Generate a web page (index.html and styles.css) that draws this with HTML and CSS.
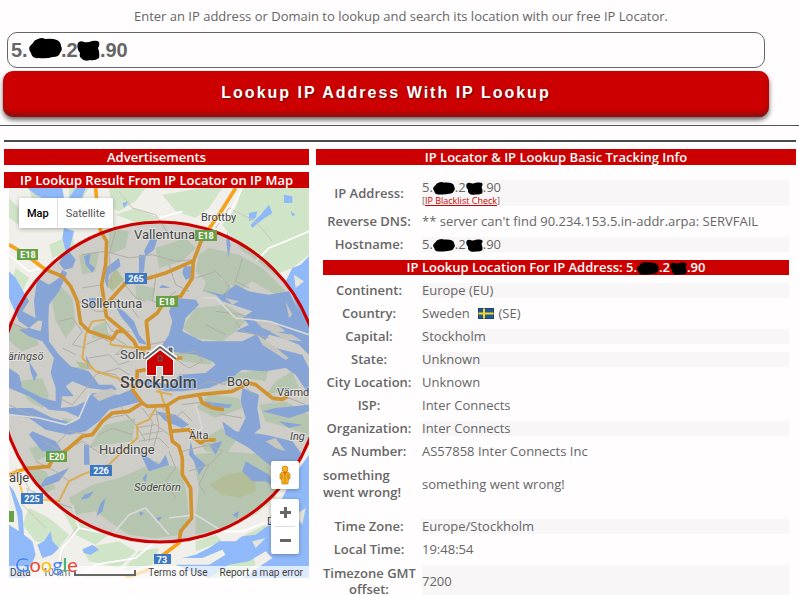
FILE: index.html
```html
<!DOCTYPE html>
<html lang="en">
<head>
    <meta charset="UTF-8">
    <meta name="viewport" content="width=device-width, initial-scale=1.0">
    <title>IP Lookup</title>
    <link rel="stylesheet" href="styles.css">
</head>
<body>
    <svg class="defs" aria-hidden="true">
        <symbol id="blob" viewBox="0 0 33 21" preserveAspectRatio="none">
            <path d="M4 5 Q5 2 9 1 Q13 -1 16 1 Q23 0 28 2 Q32 4 32 8 Q34 12 31 15 Q30 19 24 19 Q17 21 10 20 Q3 21 2 15 Q-1 11 1 8Z"/>
        </symbol>
        <symbol id="blob-square" viewBox="0 0 23 21" preserveAspectRatio="none">
            <path d="M1 3 Q3 0 7 2 Q11 3 15 1 Q20 0 22 2 Q23 5 21 8 Q23 13 22 18 Q18 21 13 20 Q7 22 4 18 Q2 16 3 13 Q-1 8 1 3Z"/>
        </symbol>
    </svg>

    <form class="lookup" action="/ip-lookup" method="get">
        <label for="ip">Enter an IP address or Domain to lookup and search its location with our free IP Locator.</label>
        <div class="field">
            <input id="ip" name="ip" type="text" value="5.&nbsp;&nbsp;&nbsp;&nbsp;&nbsp;&nbsp;.2&nbsp;&nbsp;&nbsp;&nbsp;.90">
            <svg class="mask mask-first"><use href="#blob"/></svg>
            <svg class="mask mask-second"><use href="#blob-square"/></svg>
        </div>
        <button type="submit">Lookup IP Address With IP Lookup</button>
    </form>
    <hr>

    <div class="columns">
        <div class="left">
            <h2>Advertisements</h2>
            <h2>IP Lookup Result From IP Locator on IP Map</h2>
            <div class="map">
                <svg class="tiles" viewBox="9 188 300 390" preserveAspectRatio="xMidYMid slice">
                    <rect x="9" y="188" width="300" height="390" fill="#f1efe9"/>
                    <g transform="translate(9 188) scale(.3333)">
                        <!-- forest -->
                        <g fill="#d0e4c8">
                            <path d="M0 30L30 60V110L0 90Z M60 0L150 20L130 40H70Z M180 0H240L220 30H180Z M300 0H410L380 40L330 70L310 60Z M460 20L580 0H640L600 60L560 90L500 70Z M700 0H900V150L820 190L780 230L700 190L640 110L680 60Z"/>
                            <path d="M320 80L380 60L450 90L400 110Z M20 240L60 270L30 330L0 300Z M120 170L190 140L200 180L130 210Z M720 200L900 150V200L850 240L800 260Z"/>
                            <path d="M600 180L690 200L760 240L830 310L800 320L730 280L690 310L640 270L600 290L560 250L570 200Z M440 180L530 150L560 180L520 220L450 240Z M380 290L440 300L430 340L380 330Z"/>
                            <path d="M150 290L190 330L200 410L170 450L140 400L130 340Z M210 200L270 190L260 250L220 260Z M300 120L360 130L350 180L300 200Z M250 420L290 400L300 450L250 450Z"/>
                            <path d="M560 360L650 350L720 390L680 430L640 460L560 450L520 420Z M600 260L650 280L700 330L640 330L580 310Z M490 490L560 480L640 500L600 530L520 520Z M660 560L780 540L770 580L710 570L640 590Z"/>
                            <path d="M750 650L830 640L900 680V740L840 720L770 700Z M600 620L690 630L700 660L620 690L560 660Z M640 720L680 760L650 800L590 790L570 760Z M770 620L800 580L850 550L870 600Z"/>
                            <path d="M0 400L70 430L90 470L40 490L0 460Z M20 580L100 570L120 620L100 660L60 640Z M190 540L240 530L220 560L180 570Z M290 710L380 690L370 760L290 770L240 780L270 730Z"/>
                            <path d="M380 850L440 820L510 840L530 900L540 980L520 1040L440 1050L360 1040L300 1000L260 970L200 980L180 930L250 890L330 870Z M160 690L210 700L180 740Z M60 780L100 770L120 800L80 820Z"/>
                            <path d="M550 800L640 790L760 800L800 870L800 930L740 980L640 1020L560 1040L560 980L570 900Z"/>
                            <path d="M50 830L110 850L140 900L100 920Z M60 960L120 990L180 1040L150 1080L80 1060L40 1010Z M150 950L200 990L300 1040L260 1070L200 1040Z M220 1080L330 1060L380 1090L330 1140L240 1120Z M450 1080L430 1130L340 1150L390 1090Z M560 1060L620 1040L640 1060L560 1090Z M620 1130L730 1090L740 1130L680 1170H600Z M690 1050L770 1010L780 1040L700 1060Z"/>
                        </g>
                        <path fill="#cddba9" d="M600 890L650 860L710 850L740 880L740 910L690 930L640 920Z M290 290L320 240L345 275L310 310Z M200 520L230 525L250 545L215 540Z"/>
                        <!-- water -->
                        <g fill="#90b9fa">
                            <path d="M55 0H160L165 30L130 45L80 20Z M180 30L200 0H230L215 40L205 90L185 100Z M165 120L195 130L180 190L200 215L190 240L165 245L150 225L170 190L160 150Z"/>
                            <path d="M0 250L20 270L60 340L40 370L90 395L60 420L30 400L0 330Z"/>
                            <path d="M85 270L120 290L150 270L160 245L175 255L150 310L120 350L118 400L120 460L150 500L185 535L240 550L270 590L310 590L325 605L280 605L240 600L190 580L170 595L195 625L160 625L155 660L200 655L230 640L250 615L330 620L365 605L400 640L360 650L300 665L270 700L230 730L180 740L110 725L60 690L0 680V660L70 660L130 690L190 705L215 690L170 670L120 665L60 625L0 600V540L30 560L40 600L100 630L140 640L140 600L125 555L135 510L100 460L60 445L30 425L60 420L95 430L100 400L80 395L75 340Z"/>
                            <path d="M60 520L85 560L75 580L65 550Z M230 500L245 530L235 535Z M240 330L262 330L250 360L240 350Z M225 205L245 195L240 225L258 240L250 255L230 230Z M290 240L330 210L335 235L300 260L295 300L288 280Z M320 355L345 370L375 400L390 440L415 470L390 465L365 420L335 385Z M390 200L410 200L405 250L390 265Z M425 150L445 155L435 185L410 205L405 190Z"/>
                            <path d="M525 235L548 235L545 270L530 275L520 255Z M655 130L665 170L658 210L652 160Z M780 50L790 75L760 95L730 120L725 110L755 80Z M720 75L745 70L740 90L720 100Z M825 20L850 25L850 45L825 45Z M845 70L860 80L850 85Z M460 290L485 300L450 300Z M340 45L360 40L345 60Z"/>
                            <path d="M900 205L875 230L850 240L830 280L850 320L870 370L900 420Z"/>
                            <path d="M500 330L560 335L570 350L530 390L520 430L580 460L700 460L740 440L680 430L720 410L700 390L730 370L640 340L620 320L580 305L640 320L680 290L720 310L780 320L840 310L860 350L900 420V500L870 470L820 450L780 440L760 470L880 500L900 540V620L860 560L830 540L770 550L700 545L660 575L600 600L520 610L470 610L410 590L340 570L420 580L490 590L510 560L590 555L620 530L610 520L560 500L480 490L460 470L480 440L490 400L480 370Z"/>
                            <path d="M700 600L750 620L745 660L755 720L730 740L690 730L710 690L695 640Z M640 700L680 730L770 740L850 760L880 800L850 860L780 830L720 780L650 740Z M760 670L800 660L900 650V670L840 690Z M810 700L880 710L840 720Z M580 640L670 650L660 660L590 655Z M440 670L500 680L540 710L520 720L470 700Z"/>
                            <path d="M70 730L140 760L160 790L100 790L60 740Z M225 770L240 770L242 830L225 830Z M545 760L555 800L590 830L570 860L555 820L540 800Z M390 790L450 830L470 800L480 830L420 850Z M600 770L640 760L620 800Z M710 820L780 860L800 900L770 880L730 880L700 850Z"/>
                            <path d="M225 920L255 910L240 930L215 935Z M275 945L290 930L280 970L262 985Z M400 870L415 855L410 885Z M390 970L405 975L395 985Z M110 870L180 840L150 880L90 900Z M670 980L690 970L685 990Z M440 990L460 985L450 1000Z"/>
                            <path d="M0 890L15 910L40 970L45 1040L70 1060L80 1100L50 1170H0V1010L30 1030L25 980Z M85 1070L105 1060L125 1030L130 1060L150 1080L130 1100L100 1110Z M220 1085L250 1070L270 1085L245 1100L225 1095Z"/>
                            <path d="M900 800L850 870L820 930L800 960L780 1010L740 1040L700 1045L680 1060L630 1060L600 1080L560 1100L520 1110L580 1110L640 1085L650 1100L600 1130H500L540 1150L600 1170L660 1130L720 1120L770 1090L790 1110L700 1170H900Z"/>
                        </g>
                        <g fill="#e6e5dc">
                            <path d="M735 395L790 400L830 430L800 435L760 420Z M745 440L790 470L840 510L830 515L760 470Z M855 260L885 280L860 300Z M250 620L310 600L320 620L270 640Z M770 760L800 750L830 790L800 780Z M830 340L850 380L840 390Z M730 1060L770 1050L740 1080Z M780 430L850 440L880 460L830 455Z M860 980L890 960L880 1010Z M650 330L690 340L670 350Z"/>
                        </g>
                        <!-- local roads -->
                        <g fill="none" stroke="#c9c3bb" stroke-width="3">
                            <path d="M220 200L290 190L360 210L430 200L500 220L550 215M320 130L300 200L310 300M220 300L280 290M340 280L380 330L410 340M440 270L430 340L480 350M560 270L620 250L660 290L650 340M480 230L500 290L540 310M700 210L680 280L720 300"/>
                            <path d="M150 400L190 390L220 430L190 470L230 480M220 420L300 460M230 470L300 440L350 470L320 500L380 490L410 500M240 510L300 500L330 530L360 520M260 550L320 560L340 590L380 590M290 400L310 430L360 430M210 340L260 370L290 370M310 330L360 350L390 390"/>
                            <path d="M300 690L350 680L380 710L410 760M330 650L370 700M400 660L430 700L420 760M440 660L450 720L430 790M460 660L500 690L520 670L550 700M380 720L440 710L480 740M390 760L450 750L480 780M420 680L480 680M400 740L460 730"/>
                            <path d="M100 760L160 790L220 760L280 800L330 790M140 770L180 730L240 740M270 740L310 720L370 740M80 820L140 850L180 880M490 760L520 790L600 770L640 790L600 830M540 850L600 830L570 890L590 920M480 790L500 840L470 880L500 930M520 650L600 640L640 680L700 690"/>
                            <path d="M20 840L60 900L40 950L110 1020M190 950L210 1010L160 1080L150 1170M50 900L130 940L190 960M620 120L660 60L740 100L790 160M40 60L90 60L110 120M330 10L370 60L440 80L480 140M360 560L330 540L260 560M480 500L540 540L580 520L560 490L500 500M680 400L700 430L780 450"/>
                            <path d="M440 360L500 310M420 470L470 460M560 600L600 580L650 590M690 570L730 620M790 640L840 630L890 650M620 370L700 380L740 400M590 410L650 440M0 650L60 680L130 700M150 630L190 650L240 590L260 560M0 400L60 430M160 480L200 500"/>
                        </g>
                        <g fill="none" stroke="#fff" stroke-width="5">
                            <path d="M900 130L830 160L780 180L740 220M700 0L660 80L560 150M60 110L50 60L30 40M0 680L90 690L170 710L210 690L240 620M580 330L620 330L680 390L780 400L900 440M190 950L210 1020L310 1040L360 980L410 960L480 1040M440 1060L380 1110L260 1130L210 1170M480 990L560 980L640 1030L700 1030L780 1000M140 1170L160 1080L210 1020M0 200L60 250L100 240M560 650L580 720L560 740M450 90L520 70"/>
                        </g>
                        <!-- main roads -->
                        <g fill="none" stroke="#ffc34d" stroke-width="6">
                            <path d="M290 395L250 400L230 440L220 510L260 550L340 575L375 600M305 455V470L380 480L410 490M440 660L420 695L385 710V750L330 800L300 830L220 860L180 880L150 940L100 935M30 880L40 915M450 600L470 660L485 730M440 610L490 620"/>
                        </g>
                        <g fill="none" stroke="#f5a21c" stroke-width="11" stroke-linejoin="round">
                            <path d="M260 0L265 60L275 130L293 160L290 230L278 290L292 385L340 425L375 460L385 480H420L412 400L445 375L470 335L515 325L550 270L553 220L580 150L630 80L680 0"/>
                            <path d="M300 340L350 285L420 270L470 255L550 220M0 170L50 200L110 245L160 265L185 295L205 340L215 405L240 430L310 453L325 430L345 430"/>
                            <path d="M385 545L383 590L370 605L400 645L415 655L475 652L510 630L570 620L670 610L720 585L740 590L790 630L820 634L835 625M385 550L410 545M400 645L360 670L310 675L280 700L250 740L220 745L180 780L130 815L120 835L50 842L0 860M570 620L580 645L610 660L645 665"/>
                            <path d="M475 652L485 730L490 760L510 775L520 810V860L545 900L548 990L515 1030L510 1065L450 1110M485 730L540 725L550 735M550 745L575 765L590 755L620 756M490 510H520M350 1170L420 1145"/>
                        </g>
                    </g>
                    <circle cx="160" cy="382" r="160" fill="#696969" fill-opacity=".25"/>
                    <circle cx="160" cy="382" r="160" fill="none" stroke="#c00" stroke-width="3"/>
                    <!-- road shields -->
                    <g fill="#68a048">
                        <rect x="17" y="249" width="21" height="11"/>
                        <rect x="195" y="230" width="22" height="11"/>
                        <rect x="156" y="296" width="22" height="11"/>
                        <rect x="46" y="451" width="21" height="11"/>
                        <rect x="9" y="511" width="5" height="11"/>
                    </g>
                    <g fill="#3d78c2">
                        <rect x="125" y="273" width="22" height="11"/>
                        <rect x="90" y="465" width="22" height="11"/>
                        <rect x="21" y="493" width="22" height="11"/>
                        <rect x="154" y="554" width="17" height="10"/>
                    </g>
                    <g class="shield">
                        <text x="28" y="258">E18</text>
                        <text x="206" y="239">E18</text>
                        <text x="167" y="305">E18</text>
                        <text x="57" y="460">E20</text>
                        <text x="136" y="282">265</text>
                        <text x="101" y="474">226</text>
                        <text x="32" y="502">225</text>
                        <text x="162" y="563">73</text>
                    </g>
                    <!-- place names -->
                    <g class="place">
                        <text x="134" y="239">Vallentuna</text>
                        <text x="81" y="308">Sollentuna</text>
                        <text x="120" y="359">Solna</text>
                        <text x="227" y="386">Boo</text>
                        <text x="99" y="454">Huddinge</text>
                        <text x="9" y="482">älje</text>
                    </g>
                    <g class="place small">
                        <text x="201" y="221">Brottby</text>
                        <text x="277" y="396">Värmd</text>
                        <text x="189" y="439">Älta</text>
                        <text x="267" y="525">D</text>
                        <text class="region" x="8" y="360">äringsö</text>
                        <text class="region" x="290" y="440">Ing</text>
                        <text class="region" x="134" y="491">Södertörn</text>
                    </g>
                    <text class="city" x="120" y="388">Stockholm</text>
                    <!-- house marker -->
                    <g stroke-linejoin="round">
                        <path d="M168 347H173V356L168 352Z" fill="#666" stroke="#fff"/>
                        <path d="M160 349L147 360V375H156V366H163V375H173V360Z" fill="#c00" stroke="#fff" stroke-width="2" paint-order="stroke"/>
                        <path d="M145 359L160 347L176 359" fill="none" stroke="#fff" stroke-width="5"/>
                        <path d="M145 359L160 347L176 359" fill="none" stroke="#666" stroke-width="2"/>
                        <rect x="158" y="356" width="4" height="5" fill="none" stroke="#666"/>
                    </g>
                </svg>
                <div class="map-type">
                    <button type="button" class="active">Map</button>
                    <button type="button">Satellite</button>
                </div>
                <div class="map-tools">
                    <button type="button" class="pegman" aria-label="Street View">
                        <svg viewBox="0 0 12 20" width="12" height="20">
                            <path d="M3 7H9L11 9V14H9.500L9 19H3L2.500 14H1V9Z" fill="#fbb11d" stroke="#a87308" stroke-width=".6"/>
                            <path d="M6 9V18M3 9V14M9 9V14" stroke="#b97a0a" stroke-width=".8"/>
                            <path d="M4 7L6 10L8 7Z" fill="#e8632a"/>
                            <circle cx="6" cy="4" r="3" fill="#fbb11d" stroke="#a87308" stroke-width=".6"/>
                        </svg>
                    </button>
                    <div class="zoom">
                        <button type="button" aria-label="Zoom in"><svg viewBox="0 0 11 11" width="11" height="11"><path d="M5.500 0V11M0 5.500H11" stroke="#666" stroke-width="3"/></svg></button>
                        <button type="button" aria-label="Zoom out"><svg viewBox="0 0 11 11" width="11" height="11"><path d="M0 5.500H11" stroke="#666" stroke-width="3"/></svg></button>
                    </div>
                </div>
                <div class="map-footer">
                    <a href="#data">Data</a>
                    <span class="scale">10 km <i></i></span>
                    <a href="#terms">Terms of Use</a>
                    <a href="#report">Report a map error</a>
                </div>
                <a class="google" href="#google"><span class="g-blue">G</span><span class="g-red">o</span><span class="g-yellow">o</span><span class="g-blue">g</span><span class="g-green">l</span><span class="g-red">e</span></a>
            </div>
        </div>

        <div class="right">
            <h2>IP Locator &amp; IP Lookup Basic Tracking Info</h2>
            <table>
                <tr class="band">
                    <th>IP Address:</th>
                    <td>5.<svg class="blob wide"><use href="#blob"/></svg>.2<svg class="blob"><use href="#blob-square"/></svg>.90<small>[<a href="#blacklist">IP Blacklist Check</a>]</small></td>
                </tr>
                <tr><th>Reverse DNS:</th><td>** server can't find 90.234.153.5.in-addr.arpa: SERVFAIL</td></tr>
                <tr class="band">
                    <th>Hostname:</th>
                    <td>5.<svg class="blob wide"><use href="#blob"/></svg>.2<svg class="blob"><use href="#blob-square"/></svg>.90</td>
                </tr>
                <tr>
                    <th class="title" colspan="2">IP Lookup Location For IP Address: 5.<svg class="blob wide"><use href="#blob"/></svg>.2<svg class="blob"><use href="#blob-square"/></svg>.90</th>
                </tr>
                <tr class="band"><th>Continent:</th><td>Europe (EU)</td></tr>
                <tr>
                    <th>Country:</th>
                    <td>Sweden
                        <svg class="flag" viewBox="0 0 16 11" width="16" height="11">
                            <rect width="16" height="11" fill="#1e5b93"/>
                            <path d="M0 5.500H16M6 0V11" stroke="#ffd42e" stroke-width="2"/>
                            <rect x=".5" y=".5" width="15" height="10" fill="none" stroke="#123" stroke-opacity=".35"/>
                        </svg>
                        (SE)</td>
                </tr>
                <tr class="band"><th>Capital:</th><td>Stockholm</td></tr>
                <tr class="band"><th>State:</th><td>Unknown</td></tr>
                <tr><th>City Location:</th><td>Unknown</td></tr>
                <tr><th>ISP:</th><td>Inter Connects</td></tr>
                <tr class="band"><th>Organization:</th><td>Inter Connects</td></tr>
                <tr><th>AS Number:</th><td>AS57858 Inter Connects Inc</td></tr>
                <tr><th class="error">something went wrong!</th><td>something went wrong!</td></tr>
                <tr class="spacer"><td colspan="2"></td></tr>
                <tr class="band"><th>Time Zone:</th><td>Europe/Stockholm</td></tr>
                <tr><th>Local Time:</th><td>19:48:54</td></tr>
                <tr class="band"><th class="tall">Timezone GMT<br>offset:</th><td>7200</td></tr>
            </table>
        </div>
    </div>
</body>
</html>
```

FILE: styles.css
```css
* {
    box-sizing: border-box;
}
body {
    margin: 0;
    background: #fffdfe;
    color: #666;
    font: 13px/15px "Trebuchet MS", "Open Sans", sans-serif;
}
.defs {
    position: absolute;
    width: 0;
    height: 0;
}

/* lookup form */
.lookup {
    display: flex;
    flex-direction: column;
    padding: 8px 30px 8px 3px;
}
.lookup label {
    margin-right: -30px;
    line-height: 16px;
    text-align: center;
}
.field {
    position: relative;
    margin: 8px 4px 3px;
}
.field input {
    display: block;
    width: 100%;
    height: 36px;
    padding: 0 3px;
    border: 1px solid #666;
    border-radius: 10px;
    background: #fffdfe;
    color: #666;
    font: bold 20px "Liberation Sans", Arial, sans-serif;
}
.mask {
    position: absolute;
    height: 21px;
}
.mask-first {
    left: 22px;
    top: 6px;
    width: 33px;
}
.mask-second {
    left: 70px;
    top: 8px;
    width: 23px;
}
.lookup button {
    height: 46px;
    padding: 0 0 3px;
    border: 0;
    border-radius: 10px;
    background: #c00;
    box-shadow: 0 3px 5px rgba(0, 0, 0, .6), inset 0 -4px 3px rgba(90, 30, 30, .5);
    color: #fff;
    font: bold 16px "Liberation Sans", Arial, sans-serif;
    letter-spacing: 2px;
    text-shadow: 1px 1px 2px #600;
}
hr {
    margin: 0;
    border: 0;
    border-top: 1px solid #555;
}

/* columns */
.columns {
    display: grid;
    grid-template-columns: 305fr 480fr;
    gap: 7px;
    margin: 14px 3px 0 4px;
    padding-top: 7px;
    border-top: 2px solid #4a4a4a;
}
h2 {
    margin: 0 0 7px;
    background: #c00;
    color: #fff;
    font-size: 13px;
    font-weight: 600;
    line-height: 16px;
    text-align: center;
    white-space: nowrap;
}

/* map */
.left h2 + h2 {
    margin: 0;
}
.map {
    position: relative;
    margin-left: 5px;
    font: 10px/12px Roboto, sans-serif;
}
.tiles {
    display: block;
    width: 100%;
    font-family: Roboto, sans-serif;
}
.tiles text {
    fill: #444;
}
.tiles .shield text {
    fill: #fff;
    font-size: 9px;
    font-weight: bold;
    text-anchor: middle;
}
.place,
.city {
    font-size: 13px;
    paint-order: stroke;
    stroke: rgba(255, 255, 255, .4);
    stroke-width: 2px;
}
.small {
    font-size: 11px;
}
.region {
    font-style: italic;
}
.city {
    font-size: 16px;
    font-weight: 500;
}
.map button {
    display: flex;
    align-items: center;
    justify-content: center;
    padding: 0;
    border: 0;
    background: #fff;
    color: #555;
    font: 11px Roboto, sans-serif;
}
.map-type {
    position: absolute;
    top: 10px;
    left: 10px;
    display: flex;
    border-radius: 2px;
    background: #fff;
    box-shadow: 0 1px 4px rgba(0, 0, 0, .3);
}
.map .map-type button {
    height: 30px;
    padding: 0 8px;
    border-radius: 2px;
}
.map .map-type .active {
    border-right: 1px solid #ddd;
    color: #000;
    font-weight: 500;
}
.map-tools {
    position: absolute;
    right: 10px;
    bottom: 24px;
    display: flex;
    flex-direction: column;
    gap: 10px;
    width: 28px;
}
.map .pegman {
    height: 28px;
    border-radius: 2px;
    box-shadow: 0 1px 4px rgba(0, 0, 0, .3);
}
.zoom {
    border-radius: 2px;
    background: #fff;
    box-shadow: 0 1px 4px rgba(0, 0, 0, .3);
}
.map .zoom button {
    width: 20px;
    height: 27px;
    margin: 0 auto;
}
.map .zoom button + button {
    height: 28px;
    border-top: 1px solid #ddd;
}
.map-footer {
    position: absolute;
    right: 0;
    bottom: 0;
    left: 0;
    display: flex;
    justify-content: space-between;
    padding: 1px 6px 0 1px;
    background: rgba(255, 255, 255, .7);
    line-height: 11px;
    white-space: nowrap;
}
.map-footer a {
    color: #444;
    text-decoration: none;
}
.scale {
    display: flex;
    align-items: center;
    gap: 4px;
}
.scale i {
    width: 62px;
    height: 6px;
    border: 2px solid #666;
    border-top: 0;
}
.google {
    position: absolute;
    bottom: 4px;
    left: 6px;
    font: 20px/20px Lato, sans-serif;
    text-decoration: none;
    text-shadow: 0 0 1px #fff;
}
.g-blue {
    color: #4285f4;
}
.g-red {
    color: #ea4335;
}
.g-yellow {
    color: #fbbc05;
}
.g-green {
    color: #34a853;
}

/* result table */
table {
    width: 100%;
    border-spacing: 7px 8px;
    table-layout: fixed;
}
th,
td {
    padding: 0;
}
th {
    width: 92px;
    font-weight: 600;
}
.title {
    background: #c00;
    color: #fff;
}
.band td {
    background: #f8f6f7;
}
.error {
    line-height: 17px;
    text-align: left;
}
.tall {
    line-height: 16px;
    white-space: nowrap;
}
.spacer td {
    height: 2px;
}
td small {
    display: block;
    font-size: 9px;
    line-height: 11px;
}
td a {
    color: #c00;
}
.blob {
    width: 17px;
    height: 13px;
    margin: -2px 0;
    vertical-align: -1px;
}
.wide {
    width: 22px;
}
.flag {
    margin: 0 1px 0 5px;
    vertical-align: -1px;
}
```
